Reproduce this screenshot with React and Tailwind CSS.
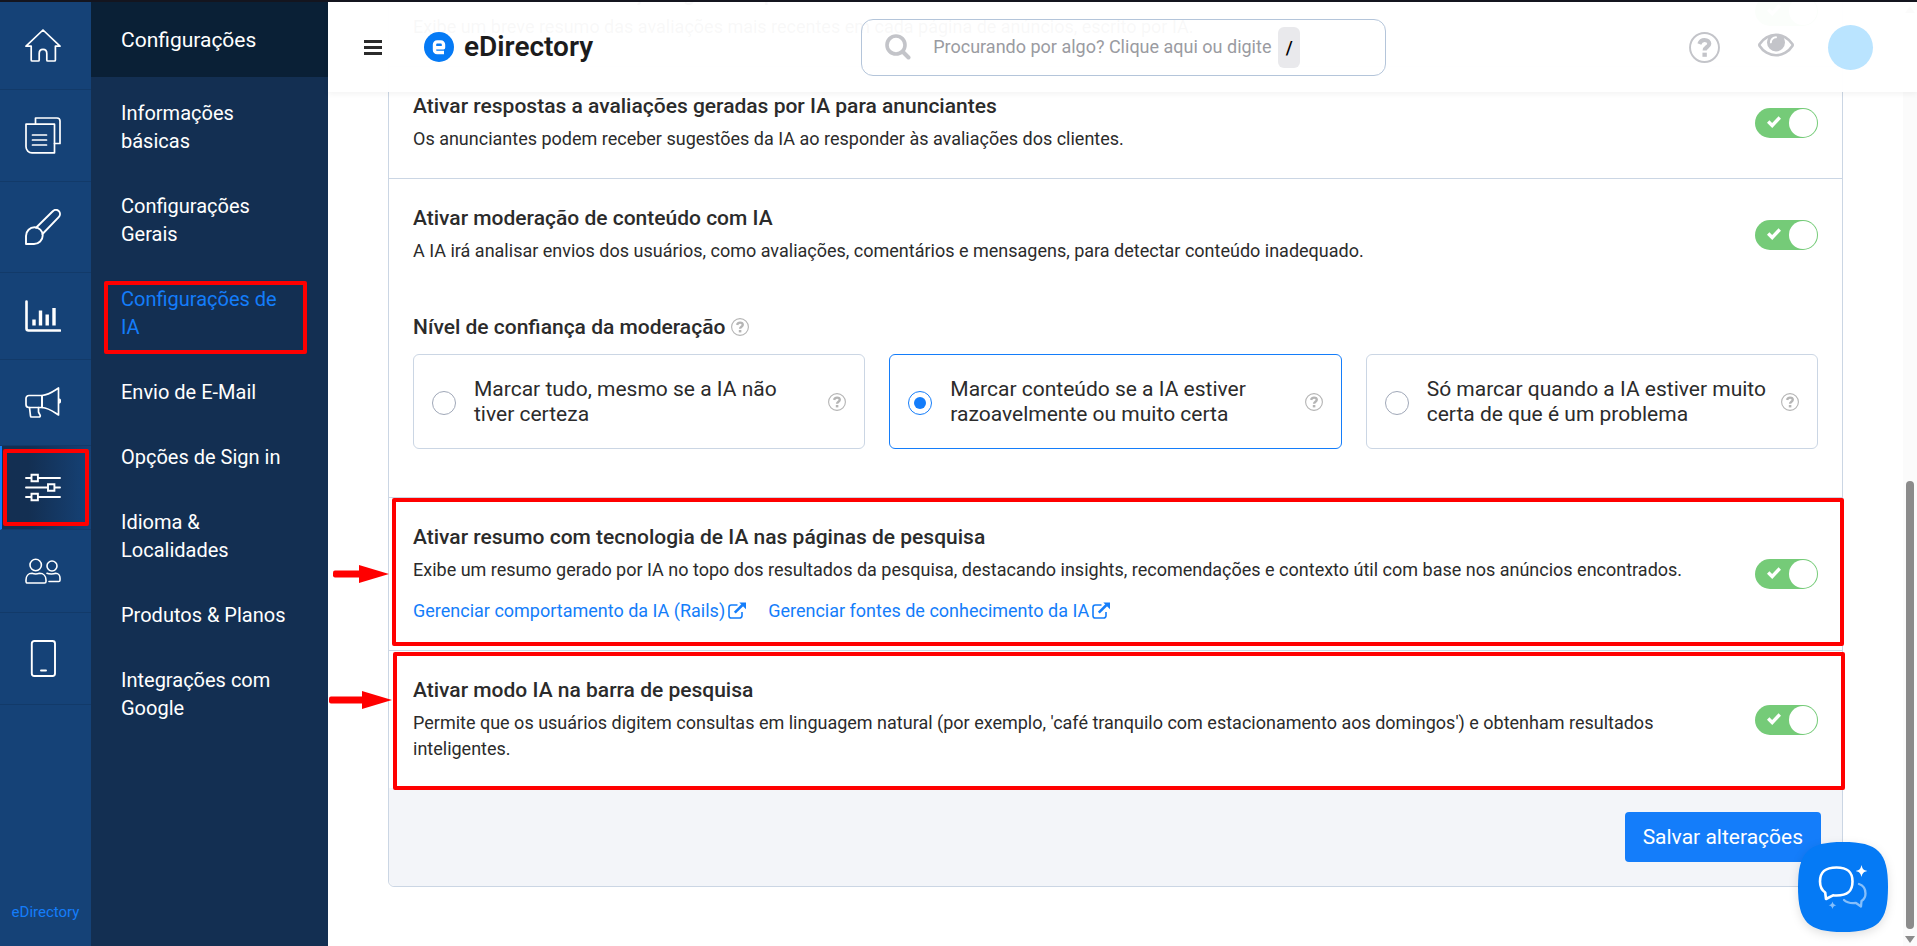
import React from "react";

const navBase = { fill: "none", stroke: "white", strokeLinecap: "round", strokeLinejoin: "round", "aria-hidden": true };

function HomeIcon() {
  return (
    <svg {...navBase} width="36" height="33" viewBox="0 0 36 33" strokeWidth="1.7">
      <path d="M18 1 35 17.2h-4.6V31a1 1 0 0 1-1 1h-6.6a1 1 0 0 1-1-1V24.5c0-5.600-7.600-5.600-7.600 0V31a1 1 0 0 1-1 1H7.200a1 1 0 0 1-1-1V17.200H1Z" />
    </svg>
  );
}
function PagesIcon() {
  return (
    <svg {...navBase} width="36" height="37" viewBox="0 0 36 37" strokeWidth="1.7">
      <path d="M10.500 7V1H32a3 3 0 0 1 3 3v22.500h-5.500" />
      <path d="M1 7.200h28.500v28.600H7a6 6 0 0 1-6-6Z" />
      <path d="M7.500 18h14M7.500 23h14M7.500 28h14" />
    </svg>
  );
}
function BrushIcon() {
  return (
    <svg {...navBase} width="36" height="36" viewBox="0 0 36 36" strokeWidth="1.9">
      <path d="M11 18.700 27.500 2.500c2-2 4.500-2 6.200-.6 1.700 1.700 1.800 4.300 0 6.200L17.500 25" />
      <path d="M1 35V27c0-5 4-8.800 8.500-8.800 4.600 0 8.200 3.600 8.200 8.200 0 4.800-3.900 8.600-8.700 8.600Z" />
    </svg>
  );
}
function ChartIcon() {
  return (
    <svg {...navBase} width="36" height="32" viewBox="0 0 36 32">
      <path strokeWidth="2.600" d="M1.500 1.500v27a2 2 0 0 0 2 2H35" />
      <path strokeWidth="3.400" strokeLinecap="butt" d="M9 19.500v6M15.500 10.500v15M22.200 14.500v11M29 8v17.500" />
    </svg>
  );
}
function HornIcon() {
  return (
    <svg {...navBase} width="36" height="31" viewBox="0 0 36 31" strokeWidth="1.700">
      <path d="M17 8.500H4c-1.800 0-3 1.200-3 3v6c0 1.800 1.200 3 3 3h13Z" />
      <path d="M17 8.500C24 8 28 4.500 33.500 1v27C28 24.500 24 21 17 20.500Z" />
      <path d="M4.500 20.500 5.500 29a1 1 0 0 0 1 1h7.500c1 0 1.500-.8 1.200-1.600l-1.700-3.400v-4.500" />
      <path d="M34.500 12.500c.8.800.8 2.200 0 3" strokeWidth="2" />
    </svg>
  );
}
function SlidersIcon() {
  return (
    <svg {...navBase} width="36" height="29" viewBox="0 0 36 29" strokeWidth="1.900" strokeLinejoin="miter">
      <path d="M1 5h5M13.500 5H35M1 14.500h21.500M30 14.500h5M1 24h5M13.500 24H35" />
      <path d="M6.500 1.800h6.400v6.400H6.500ZM23 11.300h6.400v6.400H23ZM6.500 20.800h6.400v6.400H6.500Z" />
    </svg>
  );
}
function UsersIcon() {
  return (
    <svg {...navBase} width="36" height="28" viewBox="0 0 36 28" strokeWidth="1.600">
      <circle cx="10.700" cy="8" r="5.700" />
      <path d="M7 16.300c2.500 1 5 1 7.500 0 4 0 6.500 2.800 6.500 6.700v1.600c0 .8-.6 1.400-1.400 1.400H2.400C1.600 26 1 25.400 1 24.600V23c0-3.900 2.300-6.700 6-6.700Z" />
      <circle cx="27" cy="9" r="5" />
      <path d="M22 16.300c2 .9 6.500 1 8.700 0 2.700 0 4.300 2.200 4.300 4.700v2.200c0 .8-.6 1.300-1.300 1.300H24" />
    </svg>
  );
}
function TabletIcon() {
  return (
    <svg {...navBase} width="36" height="37" viewBox="0 0 36 37" strokeWidth="1.900">
      <rect x="6.800" y="1" width="23.200" height="35" rx="2.500" />
      <path d="M16 30.500h5" />
    </svg>
  );
}

function HelpMark({ className }) {
  return (
    <svg viewBox="0 0 24 24" className={className} fill="none" stroke="currentColor" aria-hidden="true">
      <circle cx="12" cy="12" r="11.200" strokeWidth="1.500" />
      <path strokeWidth="3.200" d="M8 9.300C8.800 7 10.200 6.200 12 6.200c2.300 0 3.700 1.200 3.700 2.900 0 2.600-3.600 2.500-3.600 5.200" />
      <path strokeWidth="3.400" d="M12.100 16v3.200" />
    </svg>
  );
}

function ExternalIcon() {
  return (
    <svg viewBox="0 0 18 18" className="h-[18px] w-[18px]" fill="none" stroke="currentColor" aria-hidden="true">
      <path strokeWidth="1.600" d="M9.500 3H3.300A2.300 2.300 0 0 0 1 5.300v8.400A2.300 2.300 0 0 0 3.300 16h8.400a2.300 2.300 0 0 0 2.300-2.300V10" />
      <path strokeWidth="2.600" d="m6.800 10.700 7.700-7.700" />
      <path fill="currentColor" stroke="none" d="M11.300.5H18v6.700Z" />
    </svg>
  );
}

const railItems = [
  { label: "Início", Icon: HomeIcon },
  { label: "Conteúdo", Icon: PagesIcon },
  { label: "Design", Icon: BrushIcon },
  { label: "Relatórios", Icon: ChartIcon },
  { label: "Promoções", Icon: HornIcon },
  { label: "Configurações", Icon: SlidersIcon, active: true },
  { label: "Usuários", Icon: UsersIcon },
  { label: "Aplicativo", Icon: TabletIcon },
];

const menuItems = [
  "Informações básicas",
  "Configurações Gerais",
  "Configurações de IA",
  "Envio de E-Mail",
  "Opções de Sign in",
  "Idioma & Localidades",
  "Produtos & Planos",
  "Integrações com Google",
];

function Rail() {
  return (
    <nav className="flex w-[91px] shrink-0 flex-col bg-[#154277]">
      {railItems.map(({ label, Icon, active }) => (
        <a
          key={label}
          href="#"
          aria-label={label}
          className={
            active
              ? "relative flex border-b border-l-2 border-b-[#123a69] border-l-[#147dfa] bg-linear-to-r from-[#132f52] from-30% to-[#154277] py-[27px] pl-[23px]"
              : "relative flex border-b border-b-[#123a69] py-[27px] pl-[25px]"
          }
        >
          <Icon />
          {active && <span className="absolute left-px top-[3px] h-[77px] w-[86px] rounded-xs border-4 border-[#ff0000]" />}
        </a>
      ))}
      <a href="#" className="mt-auto pb-[22px] text-center text-[15px] leading-6 text-[#147dfa]">eDirectory</a>
    </nav>
  );
}

function SubMenu() {
  return (
    <aside className="w-[237px] shrink-0 bg-[#132f52] text-[20px] leading-7 text-white">
      <h2 className="flex h-[75px] items-center bg-[#0a2036] pl-[30px] text-[21px]">Configurações</h2>
      <ul className="flex flex-col gap-[37px] py-[22px] pl-[30px] pr-10">
        {menuItems.map((item) => (
          <li key={item} className="relative">
            <a href="#" className={item === "Configurações de IA" ? "block text-[#147dfa]" : "block"}>{item}</a>
            {item === "Configurações de IA" && (
              <span className="absolute -left-[17px] -top-1 h-[73px] w-[203px] rounded-xs border-4 border-[#ff0000]" />
            )}
          </li>
        ))}
      </ul>
    </aside>
  );
}

function Header() {
  return (
    <header className="absolute inset-x-0 top-0 z-10 flex h-[90px] items-center bg-white/97 pl-9 pr-11 shadow-[0_2px_6px_rgba(0,0,0,0.05)]">
      <button type="button" aria-label="Menu" className="flex w-[18px] flex-col gap-[3px]">
        <span className="h-[3px] bg-[#2b2b2b]" />
        <span className="h-[3px] bg-[#2b2b2b]" />
        <span className="h-[3px] bg-[#2b2b2b]" />
      </button>
      <a href="#" className="ml-[42px] flex items-center gap-[10px] text-[28px] font-semibold leading-8 text-[#1c1c1c]">
        <svg width="30" height="30" viewBox="0 0 30 30" aria-hidden="true">
          <circle cx="15" cy="15" r="15" fill="#057af5" />
          <path fill="none" stroke="white" strokeWidth="3.400" strokeLinejoin="round" d="M10.500 15.800h9v-3.300a2.600 2.600 0 0 0-2.600-2.600h-3.800a2.600 2.600 0 0 0-2.600 2.600v5.400a2.600 2.600 0 0 0 2.600 2.600h6.900" />
        </svg>
        eDirectory
      </a>
      <label className="ml-[268px] flex h-[57px] w-[525px] items-center rounded-xl border border-[#b4c5da] pl-[23px]">
        <svg width="26" height="26" viewBox="0 0 26 26" fill="none" stroke="#c3c4c9" aria-hidden="true">
          <circle cx="11" cy="11" r="9" strokeWidth="3.600" />
          <path strokeWidth="4" strokeLinecap="round" d="m18.500 18.500 5 5" />
        </svg>
        <input
          type="text"
          aria-label="Procurar"
          placeholder="Procurando por algo? Clique aqui ou digite"
          className="ml-[22px] w-[344px] text-[18px] leading-6 outline-none placeholder:text-[#9a9ba1]"
        />
        <kbd className="ml-px flex h-[41px] w-[22px] items-center justify-center rounded-md bg-[#e9e9ec] font-[Roboto,sans-serif] text-[18px] font-medium text-black">/</kbd>
      </label>
      <div className="ml-auto flex items-center gap-[38px] text-[#c3c4c9]">
        <button type="button" aria-label="Ajuda"><HelpMark className="h-[31px] w-[31px]" /></button>
        <button type="button" aria-label="Visualizar">
          <svg viewBox="0 384 1792 1152" className="mb-1 h-[24px] w-[36px]" fill="currentColor" aria-hidden="true">
            <path d="M1664 960q-152-236-381-353 61 104 61 225 0 185-131.500 316.500t-316.500 131.500-316.500-131.500-131.500-316.500q0-121 61-225-229 117-381 353 133 205 333.500 326.500t434.500 121.500 434.500-121.500 333.500-326.500zm-720-384q0-20-14-34t-34-14q-125 0-214.500 89.500t-89.500 214.500q0 20 14 34t34 14 34-14 14-34q0-86 61-147t147-61q20 0 34-14t14-34zm848 384q0 34-20 69-140 230-376.500 368.500t-499.500 138.500-499.500-139-376.500-368q-20-35-20-69t20-69q140-229 376.500-368t499.500-139 499.500 139 376.500 368q20 35 20 69z" />
          </svg>
        </button>
        <button type="button" aria-label="Conta" className="-ml-1 h-[45px] w-[45px] rounded-full bg-[#bae4ff]" />
      </div>
    </header>
  );
}

function Toggle({ label }) {
  return (
    <label className="relative flex h-[30px] w-[63px] shrink-0 items-center justify-between rounded-full bg-[#75cb78] pl-3 pr-px">
      <input type="checkbox" defaultChecked aria-label={label} className="absolute inset-0 h-full w-full appearance-none" />
      <svg width="14" height="12" viewBox="0 0 14 12" fill="none" stroke="white" strokeWidth="3.400" className="mb-[2px]" aria-hidden="true">
        <path d="m1.200 5.500 4 4 7.600-8" />
      </svg>
      <span className="h-7 w-7 rounded-full bg-white" />
    </label>
  );
}

function SettingRow({ title, description, children }) {
  return (
    <div className="flex items-center justify-between gap-16 px-6 py-[26px]">
      <div>
        <h3 className="mb-[7px] text-[21px] font-medium leading-[26px]">{title}</h3>
        <p className="text-[18px] leading-[26px]">{description}</p>
        {children}
      </div>
      <Toggle label={title} />
    </div>
  );
}

function Choice({ id, text, checked }) {
  return (
    <label
      htmlFor={id}
      className={
        checked
          ? "flex h-[95px] items-center rounded-md border border-[#147dfa] px-[18px]"
          : "flex h-[95px] items-center rounded-md border border-[#cbd6e4] px-[18px]"
      }
    >
      <input
        id={id}
        type="radio"
        name="confianca"
        defaultChecked={checked}
        className="mt-[3px] h-6 w-6 shrink-0 appearance-none rounded-full border border-[#a0a8b8] checked:border-[#147dfa] checked:bg-[#147dfa] checked:bg-clip-content checked:p-[5px]"
      />
      <span className="ml-[18px] flex-1 pr-3 text-[21px] leading-[25px]">{text}</span>
      <HelpMark className="h-[18px] w-[18px] shrink-0 text-[#b5b5b5]" />
    </label>
  );
}

function Arrow({ className, width }) {
  return (
    <svg className={className} width={width} height="18" fill="#ff0000" aria-hidden="true">
      <rect x="0" y="5.500" width={width - 24} height="7" rx="2" />
      <path d={`M${width - 30} 0 ${width} 9 ${width - 30} 18Z`} />
    </svg>
  );
}

function SettingsCard() {
  return (
    <form className="shrink-0 rounded-b-md border border-[#cbd6e4] text-[#2b2b2b]" onSubmit={(e) => e.preventDefault()}>
      <section>
        <SettingRow
          title="Ativar resumo de avaliações geradas por IA nos anúncios"
          description="Exibe um breve resumo das avaliações mais recentes em cada página de anúncios, escrito por IA."
        />
      </section>
      <section className="border-t border-[#cbd6e4]">
        <SettingRow
          title="Ativar respostas a avaliações geradas por IA para anunciantes"
          description="Os anunciantes podem receber sugestões da IA ao responder às avaliações dos clientes."
        />
      </section>
      <section className="border-t border-[#cbd6e4]">
        <SettingRow
          title="Ativar moderação de conteúdo com IA"
          description="A IA irá analisar envios dos usuários, como avaliações, comentários e mensagens, para detectar conteúdo inadequado."
        />
        <div role="radiogroup" aria-labelledby="nivel" className="px-6 pb-12 pt-6">
          <div id="nivel" className="mb-[14px] flex items-center gap-[6px] text-[21px] font-medium leading-[26px]">
            Nível de confiança da moderação
            <HelpMark className="h-[18px] w-[18px] text-[#b5b5b5]" />
          </div>
          <div className="grid grid-cols-3 gap-6">
            <Choice id="tudo" text="Marcar tudo, mesmo se a IA não tiver certeza" />
            <Choice id="razoavel" text="Marcar conteúdo se a IA estiver razoavelmente ou muito certa" checked />
            <Choice id="certa" text="Só marcar quando a IA estiver muito certa de que é um problema" />
          </div>
        </div>
      </section>
      <section className="relative border-t border-[#cbd6e4]">
        <SettingRow
          title="Ativar resumo com tecnologia de IA nas páginas de pesquisa"
          description="Exibe um resumo gerado por IA no topo dos resultados da pesquisa, destacando insights, recomendações e contexto útil com base nos anúncios encontrados."
        >
          <div className="mt-[15px] flex gap-[22px] text-[18px] leading-[26px] text-[#147dfa]">
            <a href="#" className="flex items-center gap-[3px]">Gerenciar comportamento da IA (Rails)<ExternalIcon /></a>
            <a href="#" className="flex items-center gap-[3px]">Gerenciar fontes de conhecimento da IA<ExternalIcon /></a>
          </div>
        </SettingRow>
        <span className="absolute -right-[2px] bottom-1 left-[3px] top-0 rounded-xs border-4 border-[#ff0000]" />
        <Arrow className="absolute -left-14 top-[67px]" width={56} />
      </section>
      <section className="relative border-t border-[#cbd6e4]">
        <SettingRow
          title="Ativar modo IA na barra de pesquisa"
          description="Permite que os usuários digitem consultas em linguagem natural (por exemplo, 'café tranquilo com estacionamento aos domingos') e obtenham resultados inteligentes."
        />
        <span className="absolute -bottom-[2px] -right-[3px] left-1 top-[1px] rounded-xs border-4 border-[#ff0000]" />
        <Arrow className="absolute -left-[60px] top-10" width={63} />
      </section>
      <footer className="flex justify-end rounded-b-md bg-[#f3f5f9] px-[21px] py-6">
        <button type="submit" className="rounded-[4px] bg-[#147dfa] px-[18px] py-[11px] text-[21px] leading-7 text-white">Salvar alterações</button>
      </footer>
    </form>
  );
}

function ChatButton() {
  return (
    <button
      type="button"
      aria-label="Abrir chat"
      className="absolute bottom-[14px] right-[29px] z-20 drop-shadow-[0_3px_5px_rgba(0,0,0,0.12)]"
    >
      <svg width="90" height="90" viewBox="0 0 90 90" fill="none">
        <path fill="#057af5" d="M45 0C80 0 90 10 90 45S80 90 45 90 0 80 0 45 10 0 45 0Z" />
        <path stroke="#86bffb" strokeWidth="2.300" strokeLinecap="round" strokeLinejoin="round" d="M61 42c4.500 1.500 6.500 4.500 6.500 9.500 0 3.500-1.500 6-4 7.500l-.5 5.500-5-3.500c-5 .5-9 0-12-3" />
        <path stroke="white" strokeWidth="2.600" strokeLinejoin="round" d="M38.500 25.500c11 0 16 4 16 14s-5 14-16 14c-1.500 0-2.500 0-3.500-.2L28 57l-.8-6.500C23.500 48 22 45 22 39.500c0-10 5.500-14 16.500-14Z" />
        <path fill="white" d="M63.500 23c.9 4 2 5 5.700 6-3.700 1-4.800 2.200-5.700 6-.9-3.800-2-5-5.700-6 3.700-1 4.800-2 5.700-6Z" />
        <path fill="#86bffb" d="M34.500 59.500c.6 2.500 1.400 3.200 3.800 3.800-2.400.6-3.200 1.400-3.800 3.800-.6-2.400-1.400-3.200-3.800-3.800 2.400-.6 3.200-1.300 3.800-3.800Z" />
      </svg>
    </button>
  );
}

function ScrollTrack() {
  return (
    <div className="absolute inset-y-0 right-0 flex w-[14px] flex-col items-center bg-[#fbfbfb]" aria-hidden="true">
      <svg width="10" height="8" viewBox="0 0 10 8" className="mt-1 shrink-0" fill="#8b8b8b"><path d="M5 0 10 7H0Z" /></svg>
      <div className="flex w-full flex-1 flex-col justify-end px-[3px]">
        <div className="h-[49%] rounded-full bg-[#8b8b8b]" />
      </div>
      <svg width="10" height="8" viewBox="0 0 10 8" className="mb-[2px] mt-[7px] shrink-0" fill="#8b8b8b"><path d="M0 0h10L5 7Z" /></svg>
    </div>
  );
}

export default function App() {
  return (
    <div className="flex h-screen overflow-hidden border-t-2 border-[#14151f] bg-white font-[Roboto,'Liberation_Sans',sans-serif]">
      <Rail />
      <SubMenu />
      <div className="relative flex min-w-0 flex-1 flex-col">
        <Header />
        <main className="flex min-h-0 flex-1 flex-col justify-end overflow-hidden pb-[59px] pl-[60px] pr-[74px]">
          <SettingsCard />
        </main>
        <ScrollTrack />
        <ChatButton />
      </div>
    </div>
  );
}
